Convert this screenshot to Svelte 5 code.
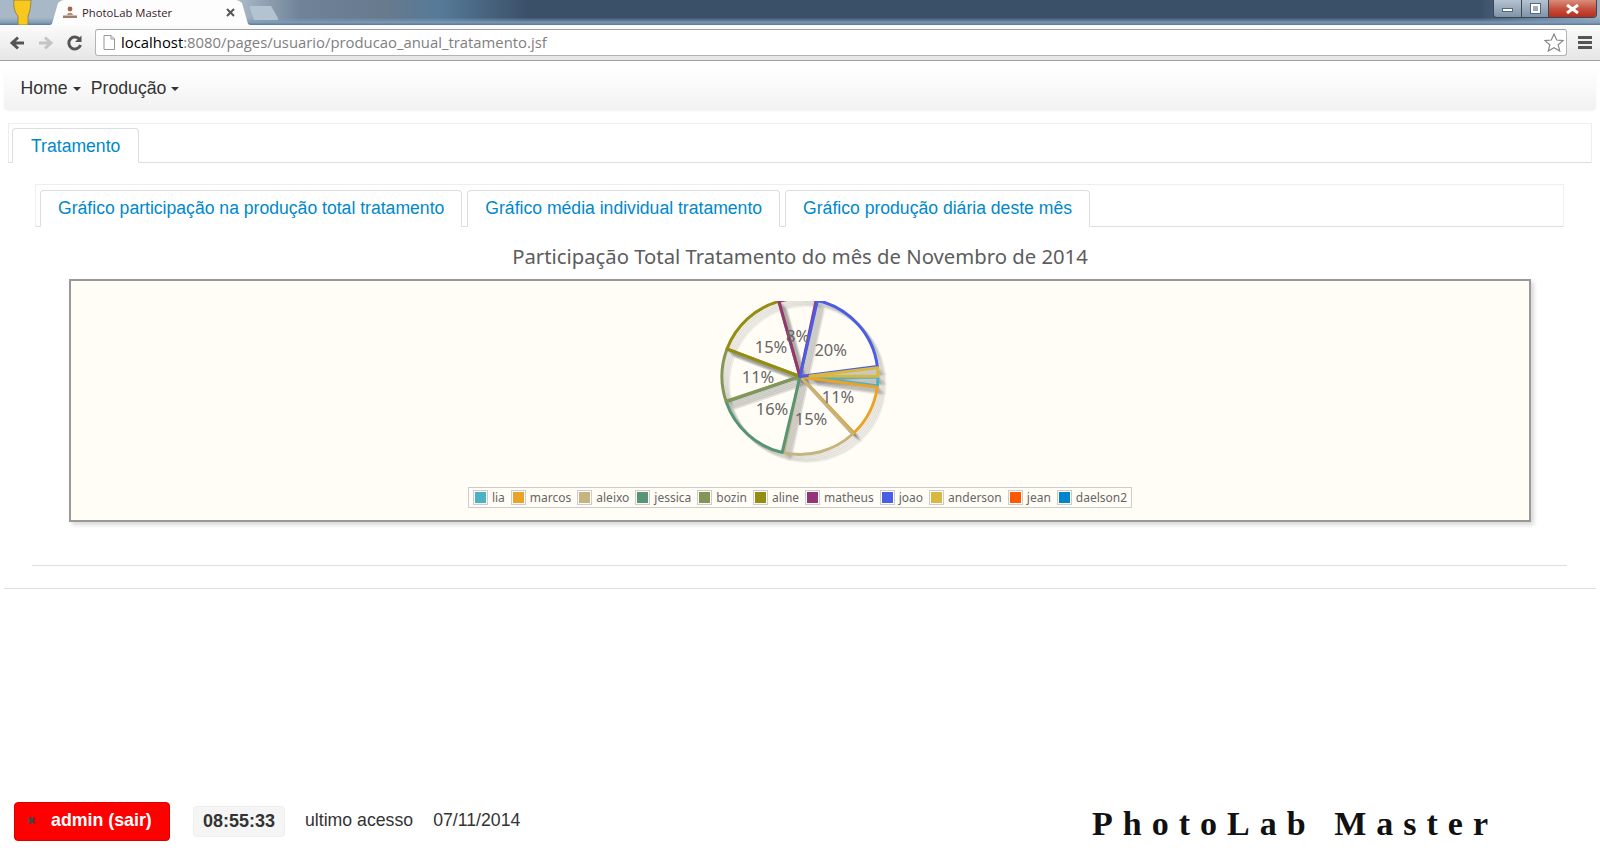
<script>
  const R = 78;
  const slices = [
    { color: '#4bb2c5', from: 0.5, to: 6.8, gap: 10 },
    { color: '#eaa228', from: 8, to: 46.4, gap: 1 },
    { color: '#c5b47f', from: 47.5, to: 102, gap: 0 },
    { color: '#579575', from: 103.2, to: 161, gap: 0 },
    { color: '#839557', from: 161.5, to: 200.5, gap: 0 },
    { color: '#958c12', from: 200.8, to: 254.3, gap: 0 },
    { color: '#953579', from: 254.3, to: 282, gap: 0 },
    { color: '#4b5de4', from: 282.9, to: 352.6, gap: 0 },
    { color: '#d8b83f', from: 353.5, to: 359.8, gap: 10 },
  ];
  const labels = [
    { text: '8%', x: 97.7, y: 41 },
    { text: '20%', x: 130.7, y: 55 },
    { text: '11%', x: 138, y: 102 },
    { text: '15%', x: 111, y: 124 },
    { text: '16%', x: 72, y: 114 },
    { text: '11%', x: 58, y: 82 },
    { text: '15%', x: 71, y: 52 },
  ];
  const legend = [
    ['lia', '#4bb2c5'], ['marcos', '#eaa228'], ['aleixo', '#c5b47f'], ['jessica', '#579575'],
    ['bozin', '#839557'], ['aline', '#958c12'], ['matheus', '#953579'], ['joao', '#4b5de4'],
    ['anderson', '#d8b83f'], ['jean', '#ff5800'], ['daelson2', '#0085cc'],
  ];
  const shadows = [1, 2, 3, 4, 5];

  function slicePath(s) {
    const cx = 100, cy = 75.5;
    const rad = (d) => (d * Math.PI) / 180;
    const mid = rad((s.from + s.to) / 2);
    const x0 = cx + s.gap * Math.cos(mid), y0 = cy + s.gap * Math.sin(mid);
    const x1 = cx + R * Math.cos(rad(s.from)), y1 = cy + R * Math.sin(rad(s.from));
    const x2 = cx + R * Math.cos(rad(s.to)), y2 = cy + R * Math.sin(rad(s.to));
    return `M${x0} ${y0}L${x1} ${y1}A${R} ${R} 0 0 1 ${x2} ${y2}Z`;
  }
</script>

<div class="page">
  <div class="browser">
    <div class="tabstrip">
      <svg class="profile" width="20" height="25" viewBox="0 0 20 25">
        <path d="M1 0C0 6 2 13 5 16L5 25H15L15 16C17 12 18 5 18 0Z" fill="#f8c81e" stroke="#7d7a52" stroke-width="0.800" />
      </svg>
      <div class="tab">
        <svg class="favicon" width="14" height="13" viewBox="0 0 14 13">
          <circle cx="7" cy="3" r="2.400" fill="#a5664a" />
          <path d="M4 9C4.500 6 9.500 6 10 9Z" fill="#b98a70" />
          <rect x="0" y="9.500" width="14" height="2.500" fill="#8c5a48" opacity="0.800" />
        </svg>
        <span class="tab-title">PhotoLab Master</span>
        <svg class="tab-close" width="9" height="9" viewBox="0 0 9 9"><path d="M1 1L8 8M8 1L1 8" stroke="#555" stroke-width="2" /></svg>
      </div>
      <div class="newtab"></div>
      <div class="winbtns">
        <div class="wb min"><span></span></div>
        <div class="wb max"><span></span></div>
        <div class="wb close">
          <svg width="15" height="10" viewBox="0 0 15 10"><path d="M2 1L13 9M13 1L2 9" stroke="#fff" stroke-width="3" /></svg>
        </div>
      </div>
    </div>
    <div class="toolbar">
      <svg width="18" height="18" viewBox="0 0 18 18"><path d="M16 9H5M10 3.500L4 9l6 5.500" fill="none" stroke="#555" stroke-width="3" /></svg>
      <svg width="18" height="18" viewBox="0 0 18 18"><path d="M2 9h11M8 3.500L14 9l-6 5.500" fill="none" stroke="#c4c4c4" stroke-width="3" /></svg>
      <svg width="18" height="18" viewBox="0 0 18 18"><path d="M14.500 11a6 6 0 1 1-.8-5.500" fill="none" stroke="#555" stroke-width="3" /><path d="M15.500 1.500v6.500h-6.500z" fill="#555" /></svg>
      <div class="omnibox">
        <svg class="pageicon" width="12" height="15" viewBox="0 0 12 15"><path d="M1 .5h7l3.500 3.500v10.500H1zM8 .5V4h3.500" fill="#fff" stroke="#999" /></svg>
        <span class="url"><b>localhost</b>:8080/pages/usuario/producao_anual_tratamento.jsf</span>
        <svg class="star" width="20" height="19" viewBox="0 0 20 19"><path d="M10 1l2.700 6 6.300.6-4.800 4.200 1.500 6.200L10 14.700 4.300 18l1.500-6.200L1 7.600 7.300 7z" fill="#fff" stroke="#888" stroke-width="1.200" /></svg>
      </div>
      <div class="menu"><i></i><i></i><i></i></div>
    </div>
  </div>

  <nav class="navbar">
    <span class="nav-item">Home <i class="caret"></i></span>
    <span class="nav-item">Produção <i class="caret"></i></span>
  </nav>

  <div class="tabs outer">
    <span class="nav-tab">Tratamento</span>
  </div>

  <div class="tabs inner">
    <span class="nav-tab">Gráfico participação na produção total tratamento</span>
    <span class="nav-tab">Gráfico média individual tratamento</span>
    <span class="nav-tab">Gráfico produção diária deste mês</span>
  </div>

  <h2 class="chart-title">Participação Total Tratamento do mês de Novembro de 2014</h2>

  <div class="chart">
    <svg class="pie" width="200" height="180" viewBox="0 0 200 180">
      {#each slices as s}
        {#each shadows as i}
          <path d={slicePath(s)} transform="translate({i * 1.4} {i * 1.4})" fill="none" stroke="#000" stroke-opacity="0.06" stroke-width="3" />
        {/each}
      {/each}
      {#each slices as s}
        <path d={slicePath(s)} fill="none" stroke={s.color} stroke-width="3" stroke-linejoin="round" />
      {/each}
      {#each labels as l}
        <text x={l.x} y={l.y} text-anchor="middle" class="pie-label">{l.text}</text>
      {/each}
    </svg>
    <div class="legend">
      {#each legend as [name, color]}
        <span class="legend-item">
          <span class="swatch"><span style="background: {color}"></span></span>
          {name}
        </span>
      {/each}
    </div>
  </div>

  <hr class="rule one" />
  <hr class="rule two" />

  <footer class="footer">
    <button class="logout"><span class="x">✖</span> admin (sair)</button>
    <span class="clock">08:55:33</span>
    <span class="last">ultimo acesso</span>
    <span class="date">07/11/2014</span>
    <span class="brand">PhotoLab Master</span>
  </footer>
</div>

<style>
  :global(body) { margin: 0; background: #fff; overflow: hidden; }
  .page { height: 860px; display: flex; flex-direction: column; font-family: "Liberation Sans", Arial, sans-serif; font-size: 17.700px; color: #333; }

  .browser { height: 61px; flex: none; }
  .tabstrip {
    height: 25px; display: flex; align-items: flex-end; position: relative;
    background:
      linear-gradient(to bottom, rgba(125, 155, 185, 0) 70%, rgba(125, 155, 185, 0.9) 90%, rgba(90, 120, 150, 1) 100%),
      linear-gradient(to right, #a9b8c6 0, #a9b8c6 240px, #6f8297 300px, #66798d 390px, #557a98 440px, #3a4f68 530px, #3a4f68 1480px, #7d92a7 1560px, #a0b0c0 1600px);
  }
  .profile { position: absolute; left: 13px; top: 0; }
  .tab {
    position: relative; margin-left: 50px; width: 200px; height: 25px; flex: none;
    display: flex; align-items: center; padding: 0 15px 0 13px; box-sizing: border-box; gap: 5px;
    background: #fdfdfd;
    clip-path: polygon(0 100%, 2px 96%, 8px 12%, 11px 3%, 14px 0, 186px 0, 189px 3%, 192px 12%, 198px 96%, 200px 100%);
  }
  .tab-title { font-family: "Open Sans", sans-serif; font-size: 11.300px; color: #3a1a2a; flex: 1; white-space: nowrap; }
  .tab-close { flex: none; }
  .favicon { flex: none; }
  .newtab { width: 30px; height: 14px; margin: 0 0 5px -1px; background: #b4c3d2; clip-path: polygon(0 0, 22px 0, 30px 100%, 5px 100%); border-radius: 2px; }
  .winbtns { position: absolute; right: 3px; top: 0; height: 17px; display: flex; border: 1px solid #3a4654; border-top: none; border-radius: 0 0 4px 4px; overflow: hidden; }
  .wb { height: 17px; display: flex; align-items: center; justify-content: center; box-sizing: border-box; }
  .min { width: 28px; background: linear-gradient(#b5c3d0, #7f93a8); border-right: 1px solid #3a4654; }
  .min span { width: 11px; height: 4px; background: #fff; margin-top: 3px; border: 1px solid #56687c; box-sizing: border-box; }
  .max { width: 27px; background: linear-gradient(#b5c3d0, #7f93a8); border-right: 1px solid #3a4654; }
  .max span { width: 9px; height: 9px; border: 2px solid #fff; outline: 1px solid #56687c; box-sizing: border-box; }
  .close { width: 47px; background: linear-gradient(#d98e7c 0, #c5533f 50%, #b92c1c 100%); }

  .toolbar {
    height: 36px; display: flex; align-items: center; gap: 11px; padding: 0 8px; box-sizing: border-box;
    background: linear-gradient(#fbfbfb, #e6e6e6); border-bottom: 1px solid #a0a0a0;
  }
  .omnibox {
    flex: 1; height: 27px; display: flex; align-items: center; background: #fff;
    border: 1px solid #b4b4b4; border-top-color: #a0a0a0; border-radius: 3px; padding: 0 2px 0 5px; box-sizing: border-box;
  }
  .pageicon { margin: 0 6px 0 2px; flex: none; }
  .url { flex: 1; font-family: "Open Sans", sans-serif; font-size: 14.850px; color: #808080; white-space: nowrap; padding-bottom: 2px; }
  .url b { font-weight: normal; color: #000; }
  .star { flex: none; }
  .menu { width: 14px; display: flex; flex-direction: column; gap: 2px; }
  .menu i { height: 3px; background: #555; display: block; }

  .navbar {
    flex: none; height: 43px; margin: 6px 4px 0; padding: 0 0 0 16.500px; border-radius: 4px; box-sizing: border-box;
    display: flex; align-items: center; gap: 10px;
    background: linear-gradient(#fff, #f2f2f2); box-shadow: 0 1px 2px rgba(0, 0, 0, 0.05);
  }
  .nav-item { color: #333; white-space: nowrap; display: flex; align-items: center; gap: 5px; }
  .caret { width: 0; height: 0; border: 4px solid transparent; border-top-color: #333; border-bottom: none; display: block; }

  .tabs { display: flex; box-sizing: border-box; flex: none; align-items: flex-end; font-size: 17.600px; }
  .outer { margin: 13px 8px 0; height: 40px; border: 1px solid #eee; border-bottom-color: #ddd; padding-left: 3px; }
  .outer .nav-tab { padding: 1px 18px 0; height: 35px; }
  .inner { margin: 21px 36px 0 35px; height: 43px; border: 1px solid #eee; border-bottom-color: #ddd; padding-left: 4px; gap: 5px; }
  .inner .nav-tab { padding: 0 17px; height: 37px; }
  .nav-tab {
    color: #0088cc; background: #fff; border: 1px solid #ddd; border-bottom-color: #fff; border-radius: 4px 4px 0 0;
    margin-bottom: -1px; display: flex; align-items: center; box-sizing: border-box; white-space: nowrap;
  }

  .chart-title { margin: 14px 0 0; height: 30px; line-height: 30px; text-align: center; flex: none; font-family: "Noto Sans", sans-serif; font-size: 20.300px; font-weight: normal; color: #5d5d5d; }
  .chart {
    flex: none; margin: 8px 69px 0 69px; height: 243px; box-sizing: border-box; background: #fffdf6; border: 2px solid #999;
    box-shadow: 3px 3px 4px rgba(0, 0, 0, 0.15); display: flex; flex-direction: column; align-items: center;
  }
  .pie { display: block; margin-top: 20px; flex: none; }
  .pie-label { font-family: "Noto Sans", sans-serif; font-size: 16.500px; fill: #666; }
  .legend { margin-top: 6px; height: 21px; display: flex; align-items: center; gap: 6px; border: 1px solid #ccc; padding: 0 4px; box-sizing: border-box; background: #fffdf6; }
  .legend-item { display: flex; align-items: center; gap: 4px; font-family: "Noto Sans", sans-serif; font-size: 12px; color: #666; }
  .swatch { border: 1px solid #ccc; padding: 1px; display: block; }
  .swatch span { display: block; width: 11px; height: 11px; }

  .rule { flex: none; border: none; border-top: 1px solid #ddd; margin: 0; }
  .one { margin: 43px 33px 0 32px; }
  .two { margin: 22px 4px 0; }

  .footer { margin-top: auto; padding: 0 0 19px 14px; display: flex; align-items: center; height: 39px; flex: none; }
  .logout {
    width: 156px; height: 39px; padding: 0 0 2px 12px; display: flex; align-items: center; gap: 16px; background: #f00; color: #fff; font: bold 17.800px "Liberation Sans", sans-serif;
    border: 1px solid #d90000; border-radius: 4px; box-sizing: border-box;
  }
  .x { color: #444; font-size: 10px; }
  .clock { margin-left: 23px; width: 92px; height: 31px; padding-bottom: 1px; display: flex; align-items: center; justify-content: center; box-sizing: border-box; background: #f5f5f5; border: 1px solid #eee; border-radius: 4px; font-weight: bold; font-size: 18px; }
  .last { margin-left: 20px; padding-bottom: 2px; }
  .date { margin-left: 20px; padding-bottom: 2px; }
  .brand { margin-left: auto; margin-right: 102px; font-family: "Liberation Serif", serif; font-weight: bold; font-size: 34px; letter-spacing: 10px; color: #111; white-space: pre; margin-top: 4px; }
</style>
